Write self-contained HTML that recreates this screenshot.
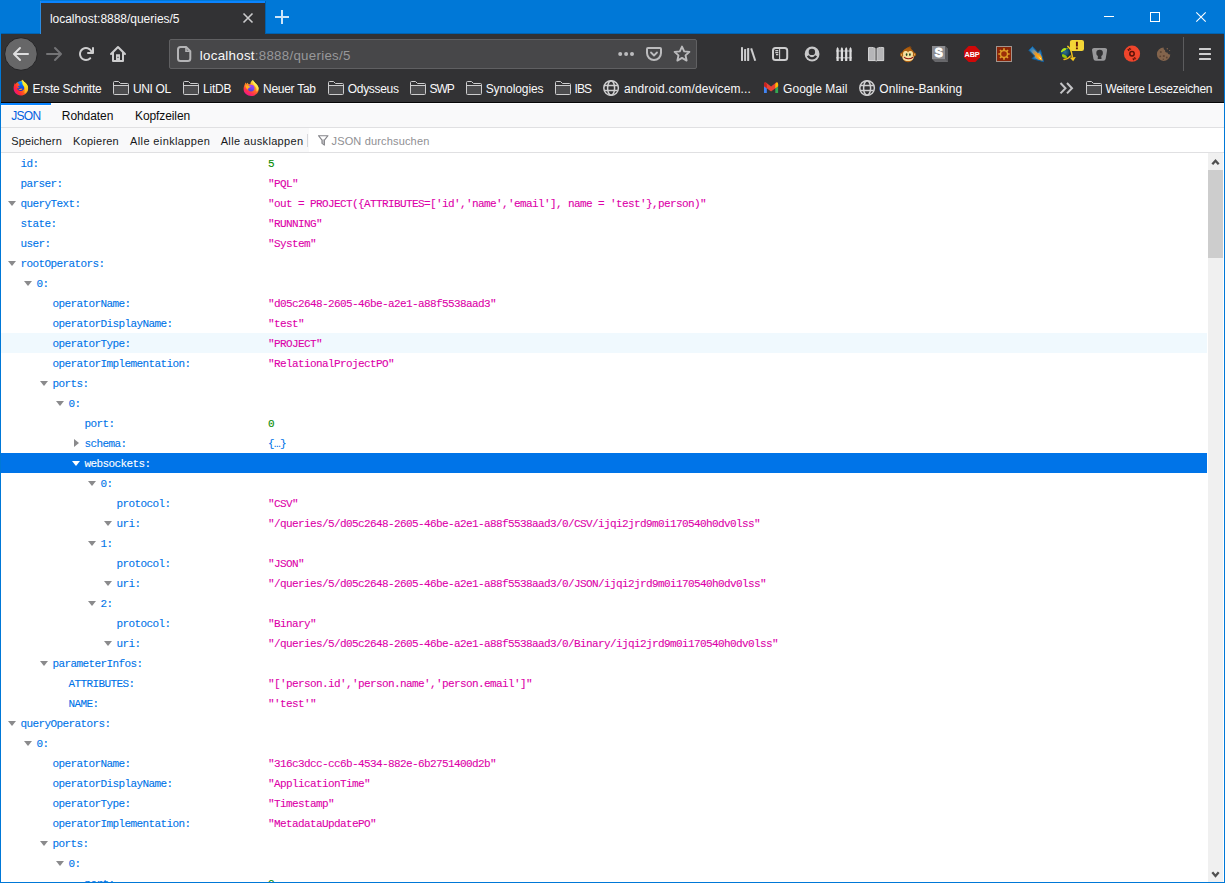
<!DOCTYPE html>
<html lang="de">
<head>
<meta charset="utf-8">
<title>localhost:8888/queries/5</title>
<style>
*{box-sizing:border-box;margin:0;padding:0}
html,body{width:1225px;height:883px;overflow:hidden;background:#0078d7}
body{font-family:"Liberation Sans",sans-serif;position:relative}
#win{position:absolute;left:0;top:0;width:1225px;height:883px;background:#0078d7;overflow:hidden}
/* title / tab bar */
#tab{position:absolute;left:41px;top:1px;width:224px;height:33px;background:#323234;border-top:2px solid #0a84ff}
#tabsep{position:absolute;left:40px;top:1px;width:1px;height:33px;background:#2b8ce2}
#tabsep2{position:absolute;left:265px;top:1px;width:1px;height:33px;background:#0061ae}
#tbline{position:absolute;left:1px;top:33px;width:1223px;height:1px;background:#0062b0}
/* nav bar */
#nav{position:absolute;left:1px;top:34px;width:1223px;height:68px;background:#323234}
#navline{position:absolute;left:1px;top:102px;width:1223px;height:1px;background:#060607}
#urlbar{position:absolute;left:169px;top:39px;width:528px;height:30px;background:#474749;border:1px solid #606062;border-radius:2px}
.t{position:absolute;line-height:16px;white-space:nowrap}
#chrome{position:absolute;left:0;top:0;width:1225px;height:160px;overflow:visible}
/* json viewer */
#jv{position:absolute;left:1px;top:103px;width:1223px;height:779px;background:#fff}
#jtabs{position:absolute;left:0;top:0;width:1223px;height:25px;background:#f9f9fa;border-top:1px solid #fff;border-bottom:1px solid #e0e0e2}
#jtabs .sel{position:absolute;left:0;top:-1px;width:50px;height:3px;background:#0a84ff;border-bottom:1px solid #fff}
#jtool{position:absolute;left:0;top:25px;width:1223px;height:25px;background:#f9f9fa;border-bottom:1px solid #e0e0e2}
#jsearch{position:absolute;left:308px;top:0;width:915px;height:24px;background:#fff}
#jsep{position:absolute;left:306px;top:6px;width:1px;height:13px;background:#d7d7db}
#rows{position:absolute;left:0;top:50px;width:1207px;height:729px;overflow:hidden;background:#fff}
.row{position:relative;height:20px;width:1206px;font-family:"Liberation Mono",monospace;font-size:11px;letter-spacing:-0.6px;line-height:20px;white-space:pre;-webkit-text-stroke:.1px currentColor}
.row.hov{background:#f0f9fe}
.row.sel{background:#0074e8}
.row .k{position:absolute;top:1px;color:#0074e8}
.row.sel .k{color:#fff}
.row .v{position:absolute;top:1px;left:267px}
.v.s{color:#dd00a9}
.v.n{color:#058b00}
.v.o{color:#0074e8}
.tw{position:absolute;top:8px;width:0;height:0;border-left:4px solid transparent;border-right:4px solid transparent;border-top:5px solid #8a8a8c}
.tw.r{top:6px;border-top:4px solid transparent;border-bottom:4px solid transparent;border-left:5px solid #8a8a8c;border-right:0;margin-left:2px}
.row.sel .tw{border-top-color:#fff}
#sb{position:absolute;left:1207px;top:50px;width:15px;height:729px;background:#f0f0f0}
#sb .th{position:absolute;left:0;top:17px;width:15px;height:88px;background:#cdcdcd}
</style>
</head>
<body>
<div id="win">
  <div id="tbline"></div>
  <div id="tabsep"></div>
  <div id="tab"></div>
  <div id="tabsep2"></div>
  <div id="nav"></div>
  <div id="urlbar"></div>
  <div id="navline"></div>
  <div id="jv">
    <div id="jtabs"><div class="sel"></div></div>
    <div id="jtool"><div id="jsep"></div><div id="jsearch"></div></div>
    <div id="rows">
<div class="row "><span class="k" style="left:19.5px">id:</span><span class="v n">5</span></div>
<div class="row "><span class="k" style="left:19.5px">parser:</span><span class="v s">"PQL"</span></div>
<div class="row "><i class="tw d" style="left:6.5px"></i><span class="k" style="left:19.5px">queryText:</span><span class="v s">"out = PROJECT({ATTRIBUTES=['id','name','email'], name = 'test'},person)"</span></div>
<div class="row "><span class="k" style="left:19.5px">state:</span><span class="v s">"RUNNING"</span></div>
<div class="row "><span class="k" style="left:19.5px">user:</span><span class="v s">"System"</span></div>
<div class="row "><i class="tw d" style="left:6.5px"></i><span class="k" style="left:19.5px">rootOperators:</span></div>
<div class="row "><i class="tw d" style="left:22.5px"></i><span class="k" style="left:35.5px">0:</span></div>
<div class="row "><span class="k" style="left:51.5px">operatorName:</span><span class="v s">"d05c2648-2605-46be-a2e1-a88f5538aad3"</span></div>
<div class="row "><span class="k" style="left:51.5px">operatorDisplayName:</span><span class="v s">"test"</span></div>
<div class="row hov"><span class="k" style="left:51.5px">operatorType:</span><span class="v s">"PROJECT"</span></div>
<div class="row "><span class="k" style="left:51.5px">operatorImplementation:</span><span class="v s">"RelationalProjectPO"</span></div>
<div class="row "><i class="tw d" style="left:38.5px"></i><span class="k" style="left:51.5px">ports:</span></div>
<div class="row "><i class="tw d" style="left:54.5px"></i><span class="k" style="left:67.5px">0:</span></div>
<div class="row "><span class="k" style="left:83.5px">port:</span><span class="v n">0</span></div>
<div class="row "><i class="tw r" style="left:70.5px"></i><span class="k" style="left:83.5px">schema:</span><span class="v o">{…}</span></div>
<div class="row sel"><i class="tw d" style="left:70.5px"></i><span class="k" style="left:83.5px">websockets:</span></div>
<div class="row "><i class="tw d" style="left:86.5px"></i><span class="k" style="left:99.5px">0:</span></div>
<div class="row "><span class="k" style="left:115.5px">protocol:</span><span class="v s">"CSV"</span></div>
<div class="row "><i class="tw d" style="left:102.5px"></i><span class="k" style="left:115.5px">uri:</span><span class="v s">"/queries/5/d05c2648-2605-46be-a2e1-a88f5538aad3/0/CSV/ijqi2jrd9m0i170540h0dv0lss"</span></div>
<div class="row "><i class="tw d" style="left:86.5px"></i><span class="k" style="left:99.5px">1:</span></div>
<div class="row "><span class="k" style="left:115.5px">protocol:</span><span class="v s">"JSON"</span></div>
<div class="row "><i class="tw d" style="left:102.5px"></i><span class="k" style="left:115.5px">uri:</span><span class="v s">"/queries/5/d05c2648-2605-46be-a2e1-a88f5538aad3/0/JSON/ijqi2jrd9m0i170540h0dv0lss"</span></div>
<div class="row "><i class="tw d" style="left:86.5px"></i><span class="k" style="left:99.5px">2:</span></div>
<div class="row "><span class="k" style="left:115.5px">protocol:</span><span class="v s">"Binary"</span></div>
<div class="row "><i class="tw d" style="left:102.5px"></i><span class="k" style="left:115.5px">uri:</span><span class="v s">"/queries/5/d05c2648-2605-46be-a2e1-a88f5538aad3/0/Binary/ijqi2jrd9m0i170540h0dv0lss"</span></div>
<div class="row "><i class="tw d" style="left:38.5px"></i><span class="k" style="left:51.5px">parameterInfos:</span></div>
<div class="row "><span class="k" style="left:67.5px">ATTRIBUTES:</span><span class="v s">"['person.id','person.name','person.email']"</span></div>
<div class="row "><span class="k" style="left:67.5px">NAME:</span><span class="v s">"'test'"</span></div>
<div class="row "><i class="tw d" style="left:6.5px"></i><span class="k" style="left:19.5px">queryOperators:</span></div>
<div class="row "><i class="tw d" style="left:22.5px"></i><span class="k" style="left:35.5px">0:</span></div>
<div class="row "><span class="k" style="left:51.5px">operatorName:</span><span class="v s">"316c3dcc-cc6b-4534-882e-6b2751400d2b"</span></div>
<div class="row "><span class="k" style="left:51.5px">operatorDisplayName:</span><span class="v s">"ApplicationTime"</span></div>
<div class="row "><span class="k" style="left:51.5px">operatorType:</span><span class="v s">"Timestamp"</span></div>
<div class="row "><span class="k" style="left:51.5px">operatorImplementation:</span><span class="v s">"MetadataUpdatePO"</span></div>
<div class="row "><i class="tw d" style="left:38.5px"></i><span class="k" style="left:51.5px">ports:</span></div>
<div class="row "><i class="tw d" style="left:54.5px"></i><span class="k" style="left:67.5px">0:</span></div>
<div class="row "><span class="k" style="left:83.5px">port:</span><span class="v n">0</span></div>
    </div>
    <div id="sb"><div class="th"></div><svg width="15" height="729" viewBox="0 0 15 729" style="position:absolute;left:0;top:0"><path d="M4.300 11.300l3.200-3.600 3.200 3.600" fill="none" stroke="#505050" stroke-width="2.300"/><path d="M4.300 719.300l3.200 3.600 3.200-3.600" fill="none" stroke="#505050" stroke-width="2.300"/></svg></div>
  </div>
<svg id="chrome" viewBox="0 0 1225 160" width="1225" height="160">
<defs>
  <g id="folder"><path d="M1 5.500h14v8.500H1z" fill="#4c4c4e"/><path d="M1.500 1.500h4l2 2h7a1 1 0 0 1 1 1v9a1 1 0 0 1-1 1h-13a1 1 0 0 1-1-1v-11a1 1 0 0 1 1-1zM.5 5.500h15" fill="none" stroke="#cdcdce" stroke-width="1"/></g>
  <g id="globe" fill="none" stroke="#cfcfd0" stroke-width="1.500">
    <circle cx="8.100" cy="8" r="7.300"/><ellipse cx="8.100" cy="8" rx="3.500" ry="7.300"/><path d="M1.700 5.600h12.800M1.700 10.400h12.800"/>
  </g>
  <g id="fx">
    <linearGradient id="fxg" x1="14.500" y1="4" x2="1.500" y2="12.500" gradientUnits="userSpaceOnUse"><stop offset="0" stop-color="#ffe226"/><stop offset=".3" stop-color="#ffa81e"/><stop offset=".55" stop-color="#ff5a1e"/><stop offset=".8" stop-color="#ff2638"/><stop offset="1" stop-color="#ea1488"/></linearGradient>
    <linearGradient id="fxb" x1="9" y1="2" x2="8" y2="12" gradientUnits="userSpaceOnUse"><stop offset="0" stop-color="#0a9dff"/><stop offset=".5" stop-color="#0a5cf0"/><stop offset="1" stop-color="#2a1fb8"/></linearGradient>
    <linearGradient id="fxy" x1="10" y1="1" x2="13" y2="13" gradientUnits="userSpaceOnUse"><stop offset="0" stop-color="#fff83a"/><stop offset=".5" stop-color="#ffe01e"/><stop offset="1" stop-color="#ffb01e"/></linearGradient>
    <path d="M9.800 .2c.2 1 .9 1.700 1.900 2.600 1.900 1.700 3.600 3.700 3.400 6.600-.3 3.900-3.600 6.600-7.400 6.500C3.600 15.800.4 12.500.6 8.500.7 6.200 1.400 4.600 2 3.300c.1.700.3 1.100.6 1.500.2-.8.700-1.500 1.500-2 2-.1 3.500-.9 5.700-2.600z" fill="url(#fxg)"/>
    <path d="M4.400 2.900C6 1.600 8.300 1.400 9.700 2.300c.6 1.700 1.500 2.900 1.700 4.700.2 2.300-1 4.200-3.200 4.500-2.100.2-3.700-1-4.100-2.800 1 .2 1.900-.1 2.500-.8-.9-.1-1.600-.7-1.800-1.500.8.100 1.500 0 2-.4C6.300 5.500 6 4.800 6 4.300 5.300 4.100 4.800 3.600 4.400 2.900z" fill="url(#fxb)"/>
    <path d="M5.300 9.300c1 .4 2.200.3 3.100-.2.500.1 1 0 1.300-.2-.5 1.200-1.800 1.800-3 1.500-.6-.2-1.100-.600-1.400-1.100z" fill="#ff9a1e"/>
    <path d="M9.800 .2c.2 1 .9 1.700 1.900 2.600 1.600 1.400 3.100 3.100 3.400 5.300.1 2-.7 3.600-2.100 4.800-.7.600-1.400.7-1.600.4 1.100-2.600.5-5.300-1.200-7.200C9.300 4.600 8.800 2.400 9.800 .2z" fill="url(#fxy)"/>
  </g>
  <g id="fx2">
    <linearGradient id="f2g" x1="12.500" y1="1.500" x2="4.500" y2="15.500" gradientUnits="userSpaceOnUse"><stop offset="0" stop-color="#fff14f"/><stop offset=".28" stop-color="#ffb52a"/><stop offset=".55" stop-color="#ff6a26"/><stop offset=".8" stop-color="#ff3050"/><stop offset="1" stop-color="#f0148c"/></linearGradient>
    <linearGradient id="f2b" x1="9" y1="5" x2="7" y2="12" gradientUnits="userSpaceOnUse"><stop offset="0" stop-color="#b23cff"/><stop offset=".5" stop-color="#7a48f0"/><stop offset="1" stop-color="#4a3fd8"/></linearGradient>
    <path d="M9.900 .6c.6 1.300 1.700 2.300 2.900 3.400 1.700 1.600 3 3.500 2.900 6-.2 3.700-3.500 6.500-7.500 6.500S.5 13.400.6 9.600c0-2 .5-3.700 1.300-5.200.1-.5.400-1 .700-1.400.2.500.5 1.100.9 1.500.3-.6.700-1 1.200-1.300.2.600.5 1.100.9 1.500C6.200 4.600 6.800 4.600 7.400 4.700 7.300 3 8.300 1.600 9.900.6z" fill="url(#f2g)"/>
    <circle cx="8.100" cy="8.600" r="3.400" fill="url(#f2b)"/>
    <path d="M2.300 5.500c1.500.2 2.700.2 3.600.9.800.5 1.500.8 2.300.9-.8.500-1.800.7-2.500 1.200-.6.400-.7 1.100-.5 1.700-1.700-.6-3-2.400-2.900-4.700z" fill="#ffb01e"/>
    <path d="M9.900 .6c.6 1.300 1.700 2.300 2.900 3.400 1.500 1.400 2.600 3 2.900 5-.5 1.500-1.300 2.500-2.400 3.200.8-2.800-.3-5.300-2.500-6.700-.9-1.500-1.200-3.200-.9-4.900z" fill="#fff45a" opacity=".75"/>
  </g>
</defs>
<!-- tab close, new tab -->
<path d="M243.5 13.5l9 9M252.5 13.5l-9 9" stroke="#cbcbcc" stroke-width="1.6" fill="none"/>
<path d="M275 17h14M282 10v14" stroke="#cfe5f8" stroke-width="2" fill="none"/>
<!-- window controls -->
<path d="M1104 16.5h10" stroke="#fff" stroke-width="1"/>
<rect x="1150.5" y="12.5" width="9" height="9" fill="none" stroke="#fff" stroke-width="1"/>
<path d="M1196.3 12.3l9.4 9.4M1205.7 12.3l-9.4 9.4" stroke="#fff" stroke-width="1.1" fill="none"/>
<!-- back -->
<circle cx="21" cy="54" r="16.300" fill="#676768" stroke="#232325" stroke-width="1"/>
<g transform="translate(13,46)" fill="#dededf"><path d="M15 7H3.414l4.293-4.293a1 1 0 0 0-1.414-1.414l-6 6a1 1 0 0 0 0 1.414l6 6a1 1 0 0 0 1.414-1.414L3.414 9H15a1 1 0 0 0 0-2z"/></g>
<!-- forward -->
<g transform="translate(62,46) scale(-1,1)" fill="#747476"><path d="M15 7H3.414l4.293-4.293a1 1 0 0 0-1.414-1.414l-6 6a1 1 0 0 0 0 1.414l6 6a1 1 0 0 0 1.414-1.414L3.414 9H15a1 1 0 0 0 0-2z"/></g>
<!-- reload -->
<g transform="translate(78,46)" fill="#cdcdce"><path d="M15 1a1 1 0 0 0-1 1v2.418A6.995 6.995 0 1 0 8 15a6.954 6.954 0 0 0 4.950-2.050 1 1 0 0 0-1.414-1.414A5.019 5.019 0 1 1 12.549 6H10a1 1 0 0 0 0 2h5a1 1 0 0 0 1-1V2a1 1 0 0 0-1-1z"/></g>
<!-- home -->
<g transform="translate(110,46)" fill="#cdcdce"><path fill-rule="evenodd" d="M15.707 7.293l-7-7a1 1 0 0 0-1.414 0l-7 7a1 1 0 0 0 1.414 1.414L2 8.414V15a1 1 0 0 0 1 1h10a1 1 0 0 0 1-1V8.414l.293.293a1 1 0 0 0 1.414-1.414zM12 14H4V6.414l4-4 4 4zM6 8.200h4V14H6zM7.500 10.800h1v1.100h-1z"/></g>
<!-- page icon -->
<path d="M180.500 47h5.600l4.200 4.200v7.300a2.500 2.500 0 0 1-2.500 2.500h-7.300a2.500 2.500 0 0 1-2.500-2.500v-9a2.500 2.500 0 0 1 2.500-2.500z" fill="none" stroke="#b4b4b6" stroke-width="2" stroke-linejoin="round"/><path d="M186 47.500v3.800h3.900" fill="none" stroke="#b4b4b6" stroke-width="1.600"/>
<!-- page actions dots -->
<g fill="#bcbcbe"><circle cx="620.2" cy="54" r="2"/><circle cx="626.1" cy="54" r="2"/><circle cx="632" cy="54" r="2"/></g>
<!-- pocket -->
<g transform="translate(646,46)" fill="none" stroke="#bcbcbe" stroke-width="2" stroke-linecap="round" stroke-linejoin="round"><path d="M2 2h12a1 1 0 0 1 1 1v4a7 7 0 0 1-14 0V3a1 1 0 0 1 1-1z"/><path d="M5 6.5l3 3 3-3" stroke-width="1.8"/></g>
<!-- star -->
<g transform="translate(682,54) scale(1.05) translate(-8,-8.300)"><path d="M8 1.200l2.100 4.550 4.950.55-3.700 3.350 1.050 4.900L8 12.050 3.600 14.550l1.050-4.900L.95 6.300l4.950-.55z" fill="none" stroke="#bcbcbe" stroke-width="1.800" stroke-linejoin="round"/></g>
<!-- library -->
<g transform="translate(740,46)" fill="#cdcdce"><rect x="1" y="1" width="2" height="14" rx=".4"/><rect x="4.100" y="3" width="2" height="12" rx=".4"/><rect x="7.100" y="2" width="2.100" height="13" rx=".4"/><path d="M10.200 2.700l1.900-.7 4.100 12.400-1.900.7z"/></g>
<!-- sidebar -->
<g transform="translate(772,46)"><rect x="1" y="2" width="14.200" height="12" rx="2.500" fill="none" stroke="#cdcdce" stroke-width="2"/><path d="M7.600 2v12" stroke="#cdcdce" stroke-width="1.100"/><path d="M3.300 4.600h3M3.300 6.600h3M4 8.600h2.300" stroke="#cdcdce" stroke-width="1.100"/></g>
<!-- account -->
<g transform="translate(804,46)"><circle cx="8.1" cy="8" r="7.4" fill="#c9c9ca"/><circle cx="7.900" cy="5.9" r="3.2" fill="#323234"/><path d="M3.9 9.700c1 1.800 2.400 2.600 4.100 2.600s3.100-.8 4.100-2.600" fill="none" stroke="#323234" stroke-width="2.300" stroke-linecap="butt"/></g>
<!-- fence -->
<g transform="translate(836,46)"><path d="M0 4.300h16v1.400H0zM0 11h16v1.600H0z" fill="#8e8e90"/><path d="M.5 2.800l1.100-1.700 1.100 1.700V15H.5zM4.800 2.800l1.100-1.700L7 2.800V15H4.800zM9.100 2.800l1.100-1.700 1.100 1.700V15H9.100zM13.400 2.800l1.100-1.700 1.100 1.700V15h-2.200z" fill="#dededf"/></g>
<!-- reader/book -->
<g transform="translate(868,46)"><path d="M.5 1.700c2.200-.5 4.500-.4 6.600.6v12.200H.5zM15.700 1.700c-2.200-.5-4.500-.4-6.600.6v12.200h6.600z" fill="#b6b6b8" stroke="#d0d0d1" stroke-width="1"/><path d="M7.600 2.600v12.400h1V2.600z" fill="#858587"/><path d="M.5 14.600h6.800l.8.700.8-.7h6.800" fill="none" stroke="#d0d0d1" stroke-width="1"/></g>
<!-- greasemonkey -->
<g transform="translate(900,46)"><ellipse cx="1.800" cy="8.700" rx="1.800" ry="2.100" fill="#b0600e"/><ellipse cx="14.300" cy="8.500" rx="1.800" ry="2.100" fill="#b0600e"/><ellipse cx="1.900" cy="8.800" rx=".7" ry="1.100" fill="#f0d090"/><ellipse cx="14.200" cy="8.600" rx=".7" ry="1.100" fill="#f0d090"/><path d="M4.200 4.300C5.800 2 8.500 .8 10.800 .1c-.3.600-.6 1-.7 1.500.6-.1 1.100-.1 1.600.1-.6.500-.9 1.300-.7 2.400z" fill="#a4540a"/><path d="M8.050 2.200c3.400 0 6.200 2.400 6.200 6.600 0 4.600-2.800 7.400-6.200 7.400s-6.200-2.800-6.200-7.400c0-4.200 2.800-6.600 6.200-6.600z" fill="#b0600e"/><path d="M8.050 6.400c.8-1.700 4.200-1.900 4.900.5.300 1.100 0 2-.2 2.500.9.700 1.100 1.900.6 3-.8 1.800-3 2.700-5.300 2.700s-4.500-.9-5.300-2.700c-.5-1.100-.3-2.300.6-3-.2-.5-.5-1.400-.2-2.500.7-2.400 4.100-2.200 4.900-.5z" fill="#f5dea0"/><ellipse cx="6.600" cy="8.600" rx=".85" ry="1.400" fill="#1f4a1f"/><ellipse cx="9.900" cy="8.600" rx=".85" ry="1.400" fill="#1f4a1f"/><path d="M4.300 11.300c.7 1 2 1.400 3.800 1.400s3.700-.4 4.600-1.400" stroke="#8e0f0f" stroke-width="1.100" fill="none" stroke-linecap="round"/></g>
<!-- stylus S cube -->
<g transform="translate(932,46)"><path d="M0 0h13l3 3v13H3l-3-3z" fill="#68686b"/><path d="M13 0l3 3v13l-3-3z" fill="#5a5a5d"/><path d="M0 0h13v13H0z" fill="#8d8d91"/><text x="6.700" y="10.800" font-family="Liberation Sans, sans-serif" font-weight="bold" font-size="12" fill="#fff" stroke="#fff" stroke-width=".9" text-anchor="middle">S</text></g>
<!-- ABP -->
<g transform="translate(964,46)"><path d="M4.700 0h6.600L16 4.700v6.600L11.300 16H4.700L0 11.300V4.700z" fill="#cf0808"/><text x="8" y="10.700" font-family="Liberation Sans, sans-serif" font-weight="bold" font-size="7.300" fill="#fff" text-anchor="middle" letter-spacing="-0.2">ABP</text></g>
<!-- sun -->
<g transform="translate(996,46)"><rect x=".5" y=".5" width="15" height="15" fill="#8a2508" stroke="#a3948c" stroke-width="1"/><path d="M8 2.300v11.400M2.300 8h11.400M4 4l8 8M12 4l-8 8" stroke="#dfa028" stroke-width="1.700"/><circle cx="8" cy="8" r="4.100" fill="#dfa028"/><circle cx="8" cy="8" r="2.800" fill="#9c2e08"/></g>
<!-- arrow blue/orange -->
<g transform="translate(1028,46)"><radialGradient id="ag" cx="0" cy="0" r="1" fx=".55" fy="0" gradientUnits="userSpaceOnUse" gradientTransform="translate(9.300 9.300) rotate(45) scale(8.500 3.600)"><stop offset="0" stop-color="#fff0a0"/><stop offset=".2" stop-color="#ffb41e"/><stop offset=".5" stop-color="#f0961e"/><stop offset=".8" stop-color="#7a94a0"/><stop offset="1" stop-color="#2f80bc"/></radialGradient><path d="M4.500 .5L.8 4.200l5.800 5.800-2.600 2.600 11.600 3.100-3.100-11.600-2.600 2.600z" fill="url(#ag)" stroke="#0f5c99" stroke-width="1" stroke-linejoin="round"/></g>
<!-- globe w/ badge -->
<g transform="translate(1060,46)"><radialGradient id="gg" cx="5" cy="6" r="6" gradientUnits="userSpaceOnUse"><stop offset="0" stop-color="#2f7191"/><stop offset=".6" stop-color="#184a68"/><stop offset="1" stop-color="#081c34"/></radialGradient><circle cx="5.500" cy="6.700" r="5.300" fill="url(#gg)"/><path d="M1.300 4.800C2 3.200 3.600 2 5 2.100c1.200.1 1.700.9.900 1.700-.9.900-2.200 1-3 1.800-.7.700-1.500.9-1.900.5-.2-.4-.1-.8.300-1.300z" fill="#b9e614"/><path d="M6.500 2.300c.6-.2 1.300-.1 1.700.3-.3.500-1 .7-1.600.5-.4-.2-.4-.6-.1-.8z" fill="#9ccc1a"/><path d="M2.200 8.300c1.400-.2 2.700.5 3.800 1.400.8.700 1.600 1.300 1.300 1.700-1.300.9-3.200.8-4.500-.2-.8-.7-1.200-1.800-.6-2.900z" fill="#98c40a"/><path d="M7.800 .4c1 .9 1.900 1.800 2.600 3 1 1.800 1.500 4.300 2 7.700" stroke="#f2c31c" stroke-width="1.500" fill="none" stroke-linecap="round"/><path d="M4 13.500c2.500-.2 4.700-1.200 6.200-3.400" stroke="#f0b81c" stroke-width="1.400" fill="none" stroke-linecap="round"/><path d="M9.800 11.700l6-.7-2.600 4.200z" fill="#f7c71a"/><rect x="9.900" y="-6.100" width="14.100" height="11.100" rx="2.200" fill="#f3d536"/><path d="M16.900 -4.200v4.600M16.900 1.600v1.600" stroke="#5e140c" stroke-width="1.900"/></g>
<!-- keyhole -->
<g transform="translate(1092,46)"><path d="M2.300 2.100h10.500a2.200 2.200 0 0 1 2.200 2.600l-1.300 8a2.400 2.400 0 0 1-2.400 2.100H3.800a2.400 2.400 0 0 1-2.400-2.100L.1 4.700a2.200 2.200 0 0 1 2.200-2.600z" fill="#98989a"/><circle cx="7.600" cy="7" r="3.300" fill="#323234"/><path d="M6 8.500h3.200l.3 4.400H5.700z" fill="#323234"/></g>
<!-- red disc -->
<g transform="translate(1124,46)"><circle cx="8" cy="7.700" r="8.100" fill="#f0452b"/><circle cx="8" cy="7.800" r="2.200" fill="none" stroke="#5a1208" stroke-width="1.500"/><path d="M3.900 4.300l3-1.900M8.900 13.600l3-1.900" stroke="#5a1208" stroke-width="2.200" stroke-dasharray="1.300 .4"/></g>
<!-- cookie -->
<g transform="translate(1156,46)"><path d="M7.600 1.500a6.700 6.700 0 1 0 6.700 6.900c-1.300.4-2.700-.4-2.800-1.800-1.500.2-2.700-1-2.400-2.400C8.100 3.900 7.500 2.700 7.600 1.500z" fill="#83644c"/><circle cx="4.800" cy="6" r="1" fill="#5e4433"/><circle cx="7.800" cy="10" r="1.100" fill="#5e4433"/><circle cx="4.300" cy="10.300" r=".9" fill="#5e4433"/><circle cx="10.800" cy="11.500" r=".9" fill="#5e4433"/><circle cx="7.300" cy="13.300" r=".7" fill="#5e4433"/><circle cx="11.300" cy="2.800" r=".7" fill="#83644c"/><circle cx="13.600" cy="4.500" r=".6" fill="#83644c"/></g>
<!-- separator + hamburger -->
<path d="M1183.5 37v34" stroke="#5c5c5e" stroke-width="1"/>
<g fill="#cdcdce"><rect x="1199" y="48" width="12" height="2" rx=".5"/><rect x="1199" y="53" width="12" height="2" rx=".5"/><rect x="1199" y="58" width="12" height="2" rx=".5"/></g>
<!-- bookmarks -->
<use href="#fx" x="13" y="79.5"/>
<use href="#folder" x="113" y="80"/>
<use href="#folder" x="183" y="80"/>
<use href="#fx2" x="243" y="79.500"/>
<use href="#folder" x="328" y="80"/>
<use href="#folder" x="410" y="80"/>
<use href="#folder" x="466" y="80"/>
<use href="#folder" x="555" y="80"/>
<use href="#globe" x="603" y="80"/>
<g transform="translate(764,81.500) scale(.94,.95)"><path d="M0 2.5v9.5h3V5z" fill="#4285f4"/><path d="M15 2.5v9.5h-3V5z" fill="#34a853"/><path d="M0 2.5a1.5 1.5 0 0 1 2.4-1.2L7.5 5.2l5.1-3.9A1.5 1.5 0 0 1 15 2.5V5l-7.5 5.5L0 5z" fill="#ea4335"/><path d="M12 3.3l.6-2A1.5 1.5 0 0 1 15 2.5V5l-3 2.2z" fill="#fbbc04"/><path d="M0 2.5V5l3 2.2V3.3l-.6-2A1.5 1.5 0 0 0 0 2.5z" fill="#c5221f"/></g>
<use href="#globe" x="859" y="80"/>
<path d="M1060.5 83l5 5.2-5 5.2M1067 83l5 5.2-5 5.2" fill="none" stroke="#c4c4c6" stroke-width="2"/>
<use href="#folder" x="1086" y="80"/>
<!-- filter icon -->
<path d="M321.800 140.300l1.100-1.100h.7l1 1.100v4.600l-2.800-1.800z" fill="#c4c4c7"/>
<path d="M318.500 135.700h9.500l-3.600 4.500v4.900l-2.400-1.700v-3.200z" fill="none" stroke="#85858a" stroke-width="1.100" stroke-linejoin="round"/>
</svg>

<div class="t" style="left:49.9px;top:11px;font-size:12px;letter-spacing:-0.02px;color:#f9f9fa">localhost:8888/queries/5</div>
<div class="t" style="left:199.8px;top:48px;font-size:13.3px;letter-spacing:0.28px;color:#f9f9fa">localhost<span style="color:#98989a">:8888/queries/5</span></div>
<div class="t" style="left:32.6px;top:81px;font-size:12px;letter-spacing:-0.22px;color:#f9f9fa">Erste Schritte</div>
<div class="t" style="left:132.9px;top:81px;font-size:12px;letter-spacing:-0.32px;color:#f9f9fa">UNI OL</div>
<div class="t" style="left:202.9px;top:81px;font-size:12px;letter-spacing:-0.17px;color:#f9f9fa">LitDB</div>
<div class="t" style="left:263.0px;top:81px;font-size:12px;letter-spacing:-0.27px;color:#f9f9fa">Neuer Tab</div>
<div class="t" style="left:347.8px;top:81px;font-size:12px;letter-spacing:-0.32px;color:#f9f9fa">Odysseus</div>
<div class="t" style="left:429.4px;top:81px;font-size:12px;letter-spacing:-0.95px;color:#f9f9fa">SWP</div>
<div class="t" style="left:485.7px;top:81px;font-size:12px;letter-spacing:-0.09px;color:#f9f9fa">Synologies</div>
<div class="t" style="left:574.6px;top:81px;font-size:12px;letter-spacing:-0.91px;color:#f9f9fa">IBS</div>
<div class="t" style="left:623.9px;top:81px;font-size:12px;letter-spacing:0.14px;color:#f9f9fa">android.com/devicem...</div>
<div class="t" style="left:783.1px;top:81px;font-size:12px;letter-spacing:0.02px;color:#f9f9fa">Google Mail</div>
<div class="t" style="left:879.3px;top:81px;font-size:12px;letter-spacing:0.07px;color:#f9f9fa">Online-Banking</div>
<div class="t" style="left:1105.5px;top:81px;font-size:12px;letter-spacing:-0.27px;color:#f9f9fa">Weitere Lesezeichen</div>
<div class="t" style="left:11.2px;top:108px;font-size:12px;letter-spacing:-0.70px;color:#0060df">JSON</div>
<div class="t" style="left:61.8px;top:108px;font-size:12px;letter-spacing:-0.07px;color:#0c0c0d">Rohdaten</div>
<div class="t" style="left:135.1px;top:108px;font-size:12px;letter-spacing:-0.11px;color:#0c0c0d">Kopfzeilen</div>
<div class="t" style="left:11.2px;top:133px;font-size:11px;letter-spacing:0.13px;color:#18191a">Speichern</div>
<div class="t" style="left:73.1px;top:133px;font-size:11px;letter-spacing:0.23px;color:#18191a">Kopieren</div>
<div class="t" style="left:130.1px;top:133px;font-size:11px;letter-spacing:0.37px;color:#18191a">Alle einklappen</div>
<div class="t" style="left:220.7px;top:133px;font-size:11px;letter-spacing:0.34px;color:#18191a">Alle ausklappen</div>
<div class="t" style="left:331.5px;top:133px;font-size:11px;letter-spacing:0.16px;color:#8f8f93">JSON durchsuchen</div>
</div>
</body>
</html>
